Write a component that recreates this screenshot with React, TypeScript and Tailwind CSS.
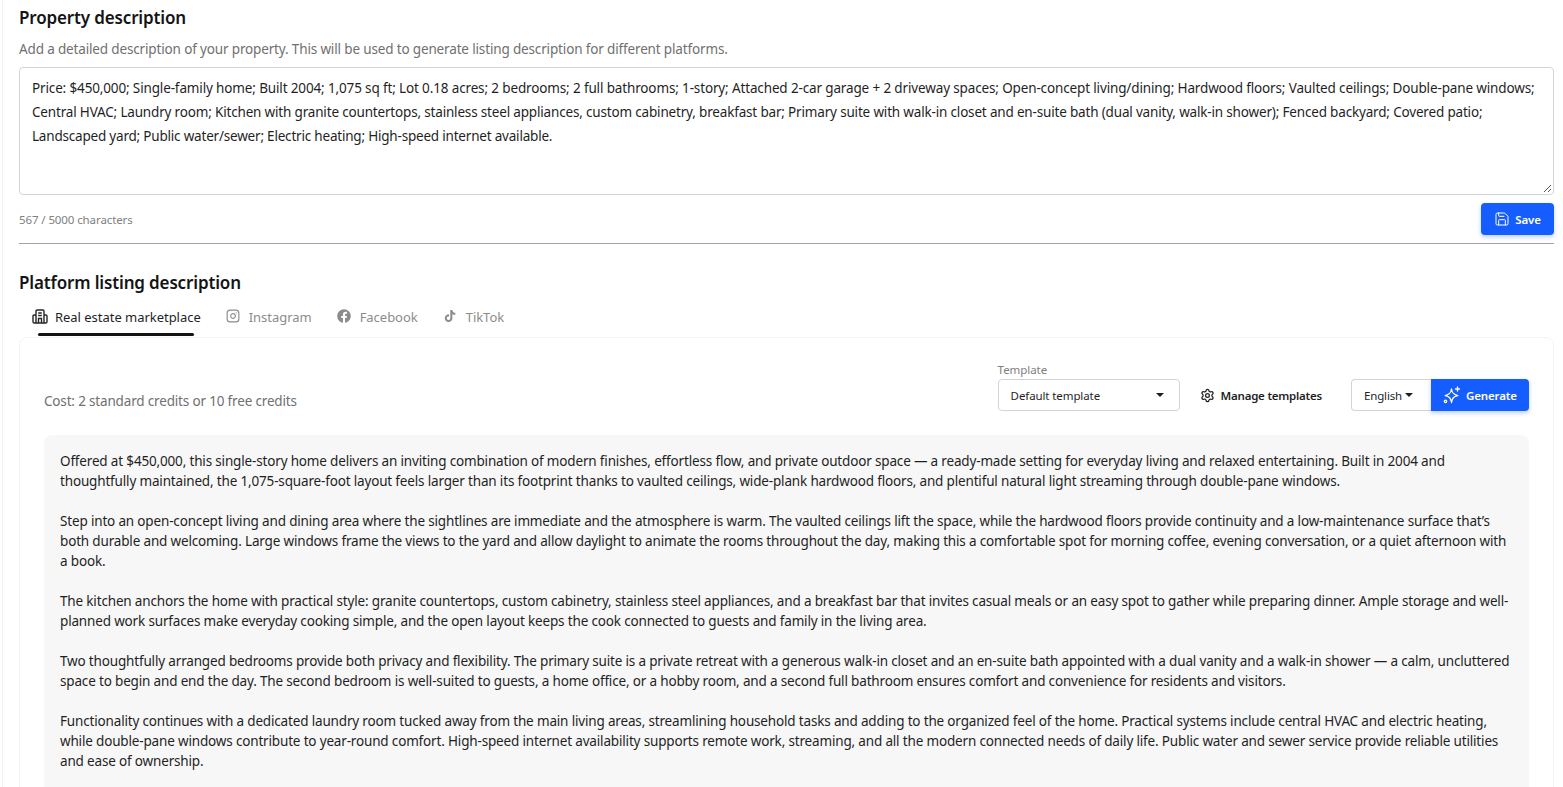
import { Settings, Save } from "lucide-react";
import { FaFacebook, FaTiktok } from "react-icons/fa";
import { LuInstagram } from "react-icons/lu";

function Caret() {
  return <span className="inline-block h-0 w-0 border-x-[4px] border-t-[4px] border-x-transparent border-t-[#1f1f1f]" />;
}

function BuildingIcon() {
  return (
    <svg className="mb-[2px]" width="16" height="15" viewBox="0 0 16 15" fill="none" stroke="#262626" strokeWidth="1.4">
      <path d="M4 14V2.2C4 1.5 4.5 1 5.2 1h5.6c.7 0 1.2.5 1.2 1.2V14" />
      <path d="M4 6H2.2C1.5 6 1 6.5 1 7.2v5.6c0 .7.5 1.2 1.2 1.2h11.6c.7 0 1.2-.5 1.2-1.2V7.2c0-.7-.5-1.2-1.2-1.2H12" />
      <path d="M6.2 4h3.6M6.2 6.5h3.6M6.5 14v-4.5h3V14" />
    </svg>
  );
}

function SparkleIcon() {
  return (
    <svg width="18" height="18" viewBox="0 0 18 18" fill="none" stroke="white" strokeWidth="1.3">
      <path d="M8.5 3C9.2 7.2 10.6 8.7 14.8 9.6 10.6 10.5 9.2 12 8.5 16.5 7.8 12 6.4 10.5 2.2 9.6 6.4 8.7 7.8 7.2 8.5 3Z" strokeLinejoin="round" />
      <path d="M14.5 1v4M12.5 3h4" strokeLinecap="round" />
      <circle cx="2.5" cy="15.3" r="1.2" />
    </svg>
  );
}

const paragraphs = [
  ["Offered at $450,000, this single-story home delivers an inviting combination of modern finishes, effortless flow, and private outdoor space — a ready-made setting for everyday living and relaxed entertaining. Built in 2004 and", "thoughtfully maintained, the 1,075-square-foot layout feels larger than its footprint thanks to vaulted ceilings, wide-plank hardwood floors, and plentiful natural light streaming through double-pane windows."],
  ["Step into an open-concept living and dining area where the sightlines are immediate and the atmosphere is warm. The vaulted ceilings lift the space, while the hardwood floors provide continuity and a low-maintenance surface that’s", "both durable and welcoming. Large windows frame the views to the yard and allow daylight to animate the rooms throughout the day, making this a comfortable spot for morning coffee, evening conversation, or a quiet afternoon with", "a book."],
  ["The kitchen anchors the home with practical style: granite countertops, custom cabinetry, stainless steel appliances, and a breakfast bar that invites casual meals or an easy spot to gather while preparing dinner. Ample storage and well-", "planned work surfaces make everyday cooking simple, and the open layout keeps the cook connected to guests and family in the living area."],
  ["Two thoughtfully arranged bedrooms provide both privacy and flexibility. The primary suite is a private retreat with a generous walk-in closet and an en-suite bath appointed with a dual vanity and a walk-in shower — a calm, uncluttered", "space to begin and end the day. The second bedroom is well-suited to guests, a home office, or a hobby room, and a second full bathroom ensures comfort and convenience for residents and visitors."],
  ["Functionality continues with a dedicated laundry room tucked away from the main living areas, streamlining household tasks and adding to the organized feel of the home. Practical systems include central HVAC and electric heating,", "while double-pane windows contribute to year-round comfort. High-speed internet availability supports remote work, streaming, and all the modern connected needs of daily life. Public water and sewer service provide reliable utilities", "and ease of ownership."],
];

export default function App() {
  return (
    <div className="ml-[2px] h-[787px] overflow-hidden border-l border-[#f3f3f3] bg-white pr-[9px] pl-[16px] font-['Noto_Sans',sans-serif] text-[#1f1f1f]">
      <h2 className="mt-[4px] h-[26px] pt-[1px] text-[17px] leading-[26px] font-semibold tracking-[-0.15px] text-[#141414]">Property description</h2>
      <p className="mt-[9px] h-[20px] text-[13.5px] leading-[20px] tracking-[-0.15px] text-[#707070]">Add a detailed description of your property. This will be used to generate listing description for different platforms.</p>
      <div className="relative mt-[8px] h-[128px] rounded-[4px] border border-[#d1d5db] px-[12px] pt-[8px] text-[13.5px] leading-[24px]">
        <div className="whitespace-nowrap tracking-[-0.14px]">Price: $450,000; Single-family home; Built 2004; 1,075 sq ft; Lot 0.18 acres; 2 bedrooms; 2 full bathrooms; 1-story; Attached 2-car garage + 2 driveway spaces; Open-concept living/dining; Hardwood floors; Vaulted ceilings; Double-pane windows;</div>
        <div className="whitespace-nowrap tracking-[-0.173px]">Central HVAC; Laundry room; Kitchen with granite countertops, stainless steel appliances, custom cabinetry, breakfast bar; Primary suite with walk-in closet and en-suite bath (dual vanity, walk-in shower); Fenced backyard; Covered patio;</div>
        <div className="whitespace-nowrap tracking-[-0.2px]">Landscaped yard; Public water/sewer; Electric heating; High-speed internet available.</div>
        <svg className="absolute right-[1px] bottom-[1px]" width="9" height="9" viewBox="0 0 9 9"><path d="M1 8 8 1M5 8 8 5" stroke="#555" strokeWidth="1" fill="none" /></svg>
      </div>
      <div className="mt-[8px] flex h-[32px] items-center justify-between">
        <span className="mt-[2px] text-[11.5px] tracking-[-0.1px] text-[#808080]">567 / 5000 characters</span>
        <button className="flex h-[32px] w-[73px] items-center justify-center gap-[5px] rounded-[4px] bg-[#165dff] text-[11.5px] font-semibold tracking-[-0.15px] text-white shadow-[0_2px_4px_rgba(22,93,255,0.3)]">
          <Save size={16} strokeWidth={1.5} /><span className="mt-[2px]">Save</span>
        </button>
      </div>
      <div className="mt-[8px] h-px bg-[#9ca3af]" />
      <h2 className="mt-[25px] h-[26px] pt-[1px] text-[17px] leading-[26px] font-semibold tracking-[-0.15px] text-[#141414]">Platform listing description</h2>
      <div className="mt-[8px] flex h-[28px] items-start text-[13px] tracking-[-0.03px] text-[#8c8c8c]">
        <div className="relative ml-[13px] flex h-[28px] items-center gap-[7px] text-[#1f1f1f]">
          <BuildingIcon /><span className="mt-[2px]">Real estate marketplace</span>
          <span className="absolute right-[7px] bottom-[-5px] left-[6px] h-[3px] rounded-full bg-[#141414]" />
        </div>
        <div className="ml-[25px] flex h-[28px] items-center gap-[9px]"><LuInstagram className="mb-[2px]" size={14} strokeWidth={2} /><span className="mt-[2px]">Instagram</span></div>
        <div className="ml-[25px] flex h-[28px] items-center gap-[9px]"><FaFacebook className="mb-[2px]" size={14} /><span className="mt-[2px]">Facebook</span></div>
        <div className="ml-[26px] flex h-[28px] items-center gap-[10px]"><FaTiktok className="mb-[2px]" size={12} /><span className="mt-[2px]">TikTok</span></div>
      </div>
      <div className="mt-[6px] h-[500px] rounded-t-[8px] border border-[#f3f4f6] px-[24px]">
        <div className="flex h-[73px] items-end justify-between">
          <span className="-mb-[2px] h-[24px] text-[13.5px] leading-[24px] tracking-[-0.17px] text-[#707070]">Cost: 2 standard credits or 10 free credits</span>
          <div className="flex items-end">
            <div>
              <div className="h-[18px] text-[11.5px] leading-[18px] tracking-[-0.05px] text-[#808080]">Template</div>
              <div className="flex h-[32px] w-[182px] items-center justify-between rounded-[4px] border border-[#d1d5db] pr-[15px] pl-[12px] text-[11.5px] tracking-[-0.1px]"><span className="mt-[2px]">Default template</span> <Caret /></div>
            </div>
            <div className="ml-[20px] flex h-[32px] items-center gap-[6px] text-[11.5px] font-semibold tracking-[-0.23px]"><Settings size={15} /><span className="mt-[2px]">Manage templates</span></div>
            <div className="ml-[29px] flex h-[32px] w-[80px] items-center gap-[3px] rounded-l-[4px] border border-r-0 border-[#d1d5db] pl-[12px] text-[11.5px] tracking-[-0.15px]"><span className="mt-[2px]">English</span> <Caret /></div>
            <button className="flex h-[32px] w-[98px] items-center justify-center gap-[5px] rounded-r-[4px] bg-[#165dff] text-[11.5px] font-semibold tracking-[-0.15px] text-white shadow-[0_2px_4px_rgba(22,93,255,0.3)]"><SparkleIcon /><span className="mt-[2px]">Generate</span></button>
          </div>
        </div>
        <div className="mt-[24px] h-[400px] rounded-[8px] bg-[#f7f7f7] p-[16px] text-[13.5px] leading-[20px] tracking-[-0.165px]">
          {paragraphs.map((p, i) => (
            <div key={i} className="mb-[20px]">
              {p.map((l, j) => <div key={j} className="whitespace-nowrap">{l}</div>)}
            </div>
          ))}
        </div>
      </div>
    </div>
  );
}
